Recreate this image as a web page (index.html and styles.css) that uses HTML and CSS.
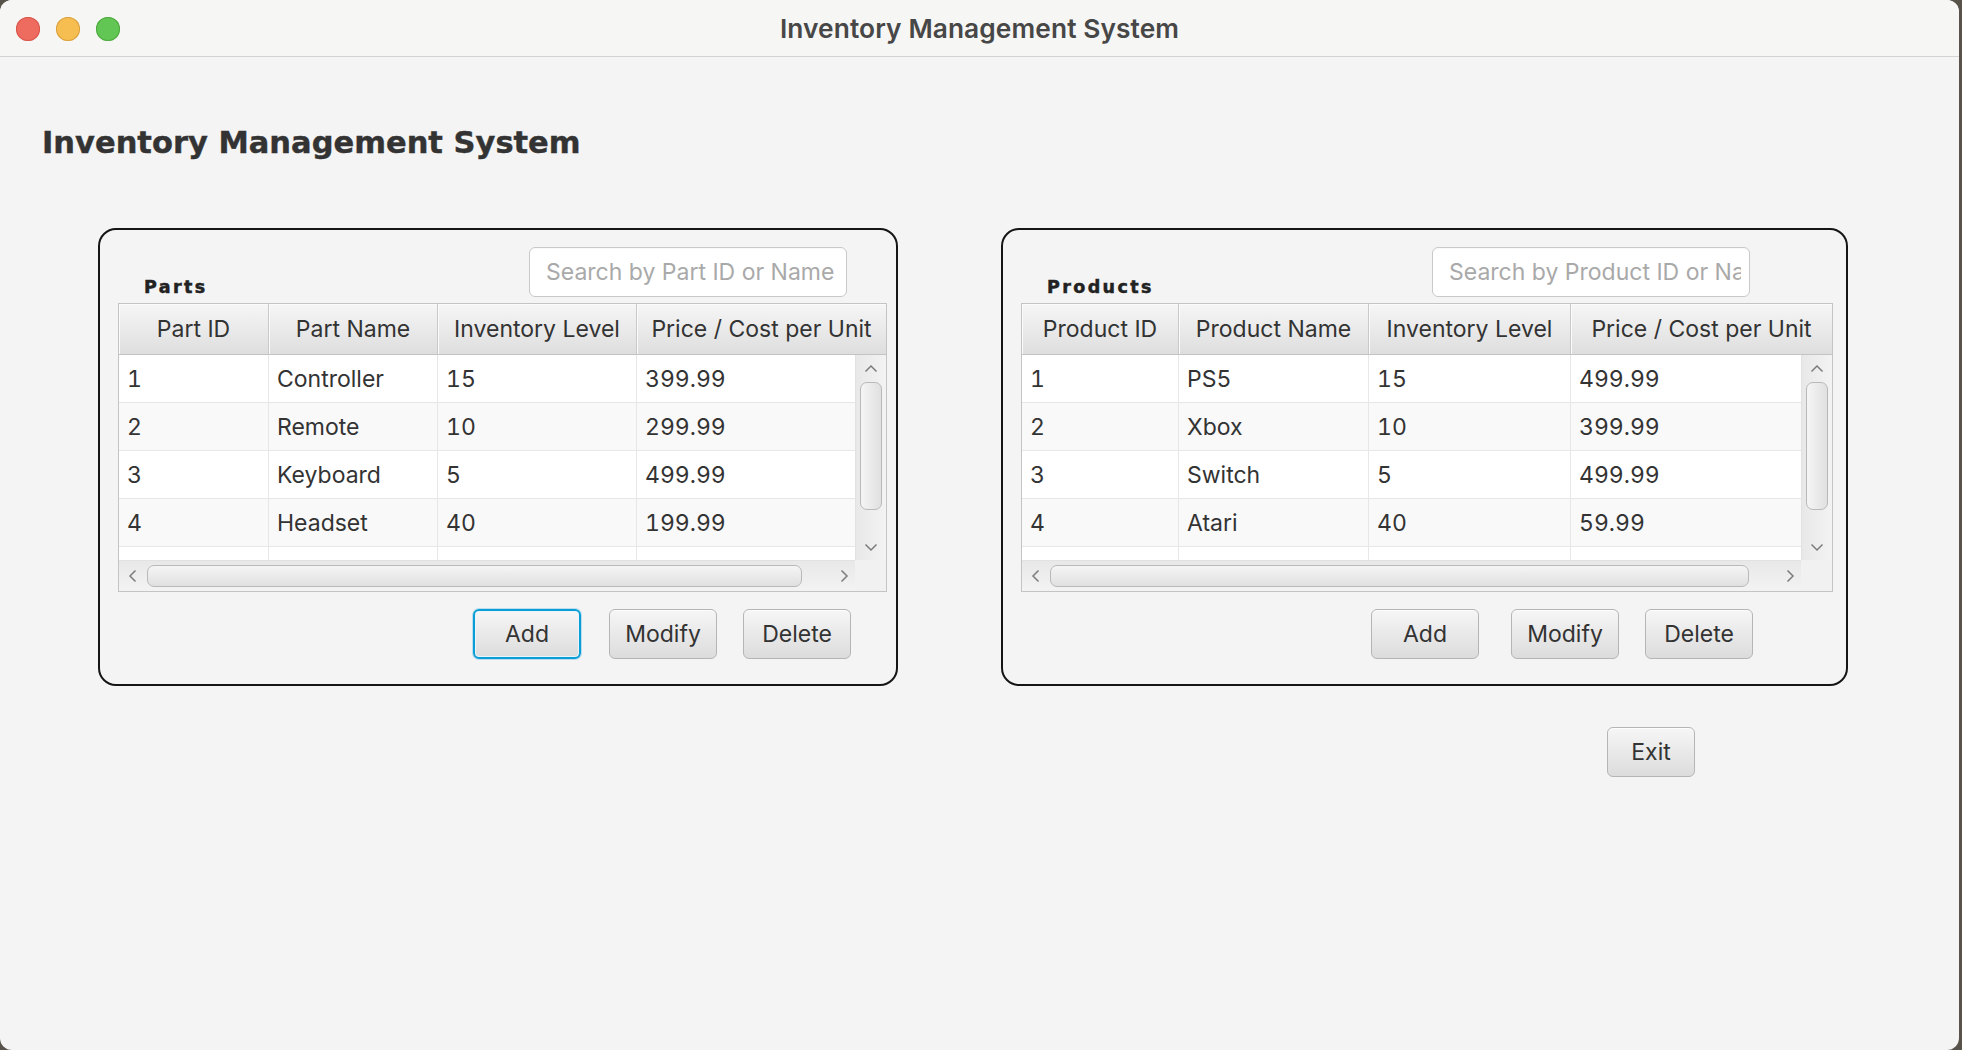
FILE: index.html
```html
<!DOCTYPE html>
<html lang="en">
<head>
<meta charset="utf-8">
<title>Inventory Management System</title>
<link rel="stylesheet" href="styles.css">
</head>
<body>
<div class="window">
  <header class="titlebar">
    <div class="lights">
      <span class="light red"></span>
      <span class="light yellow"></span>
      <span class="light green"></span>
    </div>
    <div class="title">Inventory Management System</div>
    <div></div>
  </header>

  <main class="content">
    <h1 class="heading">Inventory Management System</h1>

    <div class="panels">
      <section class="panel panel-parts">
        <div class="panel-head">
          <span class="panel-label">Parts</span>
          <input class="search" type="text" placeholder="Search by Part ID or Name">
        </div>
        <div class="table table-parts">
          <div class="thead">
            <div class="th">Part ID</div>
            <div class="th">Part Name</div>
            <div class="th">Inventory Level</div>
            <div class="th">Price / Cost per Unit</div>
          </div>
          <div class="tbody">
            <div class="tr"><div class="td">1</div><div class="td">Controller</div><div class="td">15</div><div class="td">399.99</div></div>
            <div class="tr odd"><div class="td">2</div><div class="td">Remote</div><div class="td">10</div><div class="td">299.99</div></div>
            <div class="tr"><div class="td">3</div><div class="td">Keyboard</div><div class="td">5</div><div class="td">499.99</div></div>
            <div class="tr odd"><div class="td">4</div><div class="td">Headset</div><div class="td">40</div><div class="td">199.99</div></div>
            <div class="tr"><div class="td"></div><div class="td"></div><div class="td"></div><div class="td"></div></div>
          </div>
          <div class="vscroll">
            <div class="arrow-box v-up"><svg width="14" height="9" viewBox="0 0 14 9"><polyline points="1.5,7.5 7,2 12.5,7.5" fill="none" stroke="#7c7c7c" stroke-width="1.5"/></svg></div>
            <div class="vthumb"></div>
            <div class="arrow-box v-down"><svg width="14" height="9" viewBox="0 0 14 9"><polyline points="1.5,1.5 7,7 12.5,1.5" fill="none" stroke="#7c7c7c" stroke-width="1.5"/></svg></div>
          </div>
          <div class="hscroll">
            <div class="arrow-box h-left"><svg width="9" height="14" viewBox="0 0 9 14"><polyline points="7.5,1.5 2,7 7.5,12.5" fill="none" stroke="#7c7c7c" stroke-width="1.5"/></svg></div>
            <div class="hthumb hthumb-parts"></div>
            <div class="arrow-box h-right"><svg width="9" height="14" viewBox="0 0 9 14"><polyline points="1.5,1.5 7,7 1.5,12.5" fill="none" stroke="#7c7c7c" stroke-width="1.5"/></svg></div>
          </div>
          <div class="corner"></div>
        </div>
        <div class="actions actions-parts">
          <button class="btn btn-focus" type="button">Add</button>
          <button class="btn" type="button">Modify</button>
          <button class="btn" type="button">Delete</button>
        </div>
      </section>

      <section class="panel panel-products">
        <div class="panel-head">
          <span class="panel-label">Products</span>
          <input class="search" type="text" placeholder="Search by Product ID or Name">
        </div>
        <div class="table table-products">
          <div class="thead">
            <div class="th">Product ID</div>
            <div class="th">Product Name</div>
            <div class="th">Inventory Level</div>
            <div class="th">Price / Cost per Unit</div>
          </div>
          <div class="tbody">
            <div class="tr"><div class="td">1</div><div class="td">PS5</div><div class="td">15</div><div class="td">499.99</div></div>
            <div class="tr odd"><div class="td">2</div><div class="td">Xbox</div><div class="td">10</div><div class="td">399.99</div></div>
            <div class="tr"><div class="td">3</div><div class="td">Switch</div><div class="td">5</div><div class="td">499.99</div></div>
            <div class="tr odd"><div class="td">4</div><div class="td">Atari</div><div class="td">40</div><div class="td">59.99</div></div>
            <div class="tr"><div class="td"></div><div class="td"></div><div class="td"></div><div class="td"></div></div>
          </div>
          <div class="vscroll">
            <div class="arrow-box v-up"><svg width="14" height="9" viewBox="0 0 14 9"><polyline points="1.5,7.5 7,2 12.5,7.5" fill="none" stroke="#7c7c7c" stroke-width="1.5"/></svg></div>
            <div class="vthumb"></div>
            <div class="arrow-box v-down"><svg width="14" height="9" viewBox="0 0 14 9"><polyline points="1.5,1.5 7,7 12.5,1.5" fill="none" stroke="#7c7c7c" stroke-width="1.5"/></svg></div>
          </div>
          <div class="hscroll">
            <div class="arrow-box h-left"><svg width="9" height="14" viewBox="0 0 9 14"><polyline points="7.5,1.5 2,7 7.5,12.5" fill="none" stroke="#7c7c7c" stroke-width="1.5"/></svg></div>
            <div class="hthumb hthumb-products"></div>
            <div class="arrow-box h-right"><svg width="9" height="14" viewBox="0 0 9 14"><polyline points="1.5,1.5 7,7 1.5,12.5" fill="none" stroke="#7c7c7c" stroke-width="1.5"/></svg></div>
          </div>
          <div class="corner"></div>
        </div>
        <div class="actions actions-products">
          <button class="btn btn-add" type="button">Add</button>
          <button class="btn" type="button">Modify</button>
          <button class="btn" type="button">Delete</button>
        </div>
      </section>
    </div>

    <div class="exit-row">
      <button class="btn btn-exit" type="button">Exit</button>
    </div>
  </main>
</div>
</body>
</html>
```

FILE: styles.css
```css
* {
  box-sizing: border-box;
}

html,
body {
  margin: 0;
  padding: 0;
}

body {
  width: 1962px;
  height: 1050px;
  overflow: hidden;
  background: #57524a;
  font-family: Inter, "Noto Sans", sans-serif;
  color: #333;
}

.window {
  width: 1959px;
  height: 1050px;
  background: #f4f4f4;
  border-radius: 12px;
  overflow: hidden;
  display: flex;
  flex-direction: column;
}

/* Title bar */
.titlebar {
  flex: none;
  height: 57px;
  background: #f6f6f4;
  border-bottom: 1px solid #d3d3d3;
  display: grid;
  grid-template-columns: 1fr auto 1fr;
  align-items: center;
}

.lights {
  display: flex;
  gap: 16px;
  padding-left: 16px;
  padding-top: 1px;
}

.light {
  width: 24px;
  height: 24px;
  border-radius: 50%;
}

.red {
  background: #ee6b60;
  box-shadow: inset 0 0 0 1px #d9564b;
}

.yellow {
  background: #f6be50;
  box-shadow: inset 0 0 0 1px #d9a141;
}

.green {
  background: #62c655;
  box-shadow: inset 0 0 0 1px #4fa83f;
}

.title {
  font-family: Inter, "Noto Sans", sans-serif;
  font-weight: 600;
  font-size: 26.3px;
  color: #474747;
  letter-spacing: 0.1px;
}

/* Content */
.content {
  flex: 1;
  padding-left: 32px;
}

.heading {
  margin: 68px 0 0;
  padding-left: 10px;
  font-family: "DejaVu Sans", "Liberation Sans", sans-serif;
  font-weight: 700;
  font-size: 30.5px;
  line-height: 36px;
  color: #333;
  -webkit-text-stroke: 0.4px #333;
}

.panels {
  display: flex;
  gap: 103px;
  margin: 67px 0 0 66px;
}

.panel {
  height: 458px;
  border: 2px solid #151515;
  border-radius: 18px;
  padding: 17px 0 0 18px;
}

.panel-parts {
  width: 800px;
}

.panel-products {
  width: 847px;
}

.panel-head {
  display: flex;
  align-items: flex-end;
  height: 50px;
}

.panel-label {
  width: 411px;
  flex: none;
  padding-left: 26px;
  font-family: "DejaVu Sans", "Liberation Sans", sans-serif;
  font-weight: 700;
  font-size: 17.5px;
  letter-spacing: 2.4px;
  line-height: 20px;
  color: #222;
  -webkit-text-stroke: 0.5px #222;
}

.search {
  width: 318px;
  height: 50px;
  margin: 0;
  border: 1px solid #c9c9c9;
  border-radius: 6px;
  background: #fff;
  padding: 0 8px 0 16px;
  font-family: Inter, "Noto Sans", sans-serif;
  font-size: 23px;
  color: #333;
  box-shadow: inset 0 1px 1px rgba(0, 0, 0, 0.03);
  outline: none;
}

.search::placeholder {
  color: #a9a9a9;
}

/* Table */
.table {
  margin-top: 6px;
  display: grid;
  grid-template-columns: 1fr 31px;
  grid-template-rows: 51px 205px 31px;
  border: 1px solid #c4c4c4;
  background: #f0f0f0;
}

.table-parts {
  width: 769px;
  --c1: 150px;
  --c2: 169px;
  --c3: 199px;
}

.table-products {
  width: 812px;
  --c1: 157px;
  --c2: 190px;
  --c3: 202px;
}

.thead {
  grid-column: 1 / 3;
  display: grid;
  grid-template-columns: var(--c1) var(--c2) var(--c3) 1fr;
  border-bottom: 1px solid #c3c3c3;
}

.th {
  display: flex;
  align-items: center;
  justify-content: center;
  font-size: 23px;
  color: #333;
  white-space: nowrap;
  background: linear-gradient(#f6f6f6, #dedede);
  border-right: 1px solid #c9c9c9;
  box-shadow: inset 1px 1px 0 #fbfbfb;
}

.th:last-child {
  border-right: none;
}

.tbody {
  overflow: hidden;
  background: #fff;
}

.tr {
  display: grid;
  grid-template-columns: var(--c1) var(--c2) var(--c3) 1fr;
  height: 48px;
  border-bottom: 1px solid #e7e7e7;
  background: #fff;
}

.tr.odd {
  background: #f9f9f9;
}

.td {
  display: flex;
  align-items: center;
  padding-left: 8px;
  font-size: 23px;
  font-variant-numeric: tabular-nums;
  color: #333;
  white-space: nowrap;
  border-right: 1px solid #e7e7e7;
}

.td:last-child {
  border-right: none;
}

/* Scrollbars */
.vscroll {
  display: flex;
  flex-direction: column;
  align-items: center;
  background: linear-gradient(to right, #e8e8e8, #f3f3f3);
  border-left: 1px solid #e2e2e2;
}

.arrow-box {
  display: flex;
  align-items: center;
  justify-content: center;
  flex: none;
}

.v-up {
  height: 26px;
  width: 100%;
}

.v-down {
  height: 26px;
  width: 100%;
  margin-top: auto;
}

.vthumb {
  width: 22px;
  height: 128px;
  margin-top: 1px;
  border: 1px solid #b9b9b9;
  border-radius: 7px;
  background: linear-gradient(to right, #f5f5f5, #e0e0e0);
}

.hscroll {
  display: flex;
  align-items: center;
  background: linear-gradient(#e8e8e8, #f3f3f3);
  border-top: 1px solid #e2e2e2;
}

.h-left {
  width: 27px;
  height: 100%;
}

.h-right {
  width: 22px;
  height: 100%;
  margin-left: auto;
}

.hthumb {
  height: 22px;
  margin-left: 1px;
  border: 1px solid #b9b9b9;
  border-radius: 7px;
  background: linear-gradient(#f5f5f5, #e0e0e0);
}

.hthumb-parts {
  width: 655px;
}

.hthumb-products {
  width: 699px;
}

.corner {
  background: #f1f1f1;
}

/* Buttons */
.actions {
  display: flex;
  gap: 26px;
  margin-top: 17px;
}

.actions-parts {
  padding-left: 355px;
}

.actions-parts .btn-focus {
  margin-right: 2px;
}

.actions-products {
  padding-left: 350px;
}

.actions-products .btn-add {
  margin-right: 6px;
}

.btn {
  width: 108px;
  height: 50px;
  margin: 0;
  padding: 0;
  border: 1px solid #b5b5b5;
  border-radius: 6px;
  background: linear-gradient(#f6f6f6, #dcdcdc);
  box-shadow: inset 0 1px 0 #fdfdfd;
  font-family: Inter, "Noto Sans", sans-serif;
  font-size: 23px;
  color: #333;
  cursor: default;
}

.btn-focus {
  border: 2px solid #0a9dd6;
  box-shadow: 0 0 0 1px rgba(10, 157, 214, 0.25), inset 0 0 0 1px #e8f6fc;
}

.exit-row {
  margin-top: 41px;
  padding-left: 1575px;
}

.btn-exit {
  width: 88px;
}
```
